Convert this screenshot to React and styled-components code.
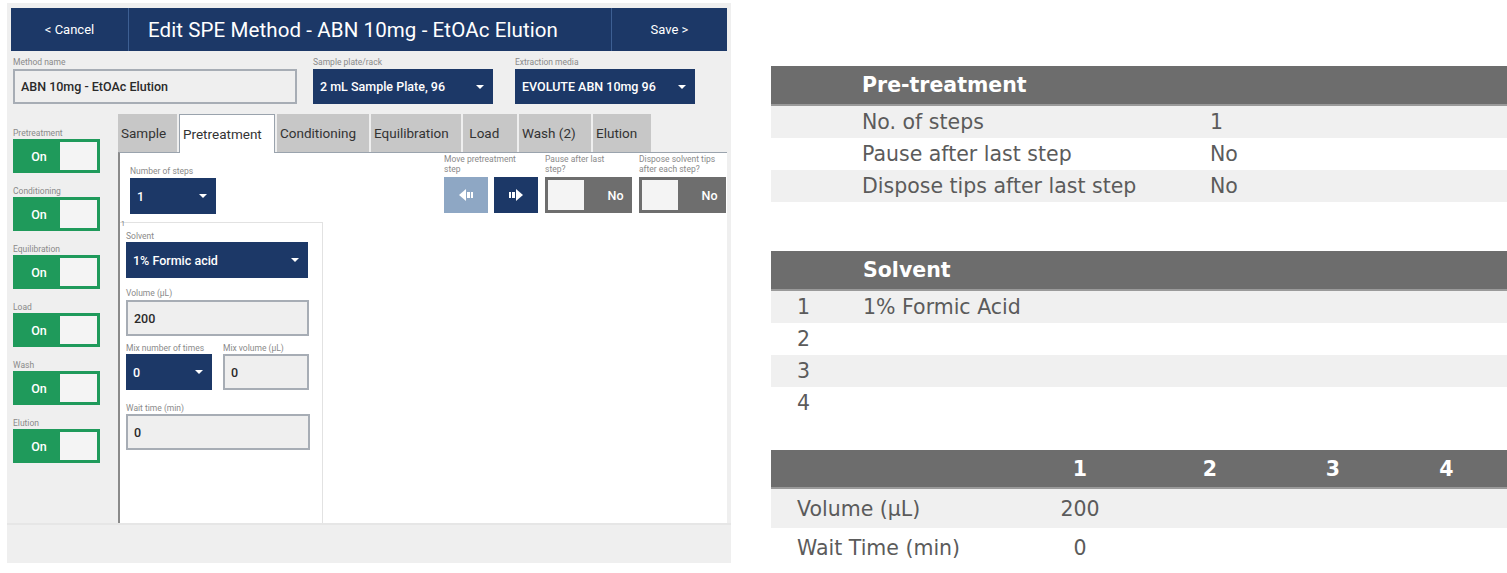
import React from "react";
import styled, { createGlobalStyle } from "styled-components";

const GlobalStyle = createGlobalStyle`
  html, body {
    margin: 0;
    padding: 0;
    background: #ffffff;
  }
  body {
    font-family: Roboto, "Liberation Sans", sans-serif;
  }
`;

const navy = "#1c3867";

const Page = styled.div`
  display: flex;
  align-items: flex-start;
  width: 1507px;
  height: 573px;
  overflow: hidden;
`;

/* ---------- left: device screen ---------- */

const Screen = styled.div`
  margin: 3px 0 0 7px;
  width: 724px;
  height: 560px;
  background: #efefef;
  display: flex;
  flex-direction: column;
  padding: 5px 4px 0 4px;
  box-sizing: border-box;
`;

const Header = styled.div`
  display: flex;
  height: 43px;
  background: ${navy};
  color: #fff;
  flex-shrink: 0;
`;

const HeaderButton = styled.div`
  width: ${(p) => p.$w}px;
  display: flex;
  align-items: center;
  justify-content: center;
  font-size: 13px;
  ${(p) => (p.$side === "left" ? "border-right" : "border-left")}: 1px solid #3d5f93;
  box-sizing: border-box;
`;

const HeaderTitle = styled.div`
  flex: 1;
  display: flex;
  align-items: center;
  justify-content: center;
  font-size: 20.5px;
  padding-right: 34px;
  letter-spacing: 0.1px;
`;

const FieldRow = styled.div`
  display: flex;
  padding: 7px 0 0 2px;
  height: 56px;
  box-sizing: border-box;
  flex-shrink: 0;
`;

const Field = styled.div`
  display: flex;
  flex-direction: column;
  margin-right: ${(p) => p.$mr || 0}px;
  width: ${(p) => (p.$w ? p.$w + "px" : "auto")};
`;

const Label = styled.div`
  font-size: 8.5px;
  color: #8a8a8a;
  height: ${(p) => p.$h || 11}px;
  line-height: 9.5px;
  white-space: ${(p) => (p.$wrap ? "normal" : "nowrap")};
  width: ${(p) => (p.$w ? p.$w + "px" : "auto")};
`;

const TextInput = styled.div`
  width: ${(p) => p.$w}px;
  height: ${(p) => p.$h || 35}px;
  box-sizing: border-box;
  border: 2px solid #a7adb5;
  background: #efefef;
  display: flex;
  align-items: center;
  padding-left: 6px;
  font-size: 12.5px;
  font-weight: 500;
  color: #2a2a2a;
`;

const Select = styled.div`
  width: ${(p) => p.$w}px;
  height: ${(p) => p.$h || 36}px;
  box-sizing: border-box;
  background: ${navy};
  color: #fff;
  display: flex;
  align-items: center;
  justify-content: space-between;
  padding: 0 9px 0 7px;
  font-size: 12.5px;
  font-weight: 500;
`;

const Caret = styled.span`
  width: 0;
  height: 0;
  border-left: 4px solid transparent;
  border-right: 4px solid transparent;
  border-top: 4px solid #fff;
`;

const Body = styled.div`
  display: flex;
  flex: 1;
  min-height: 0;
`;

const SideColumn = styled.div`
  width: 107px;
  flex-shrink: 0;
  display: flex;
  flex-direction: column;
  gap: 14px;
  padding: 22px 0 0 2px;
  box-sizing: border-box;
`;

const ToggleGroup = styled.div`
  display: flex;
  flex-direction: column;
`;

const Toggle = styled.div`
  width: ${(p) => p.$w || 87}px;
  height: ${(p) => p.$h || 34}px;
  box-sizing: border-box;
  border: 3px solid ${(p) => (p.$on ? "#1f9a5b" : "#6e6e6e")};
  background: ${(p) => (p.$on ? "#1f9a5b" : "#6e6e6e")};
  display: flex;
  flex-direction: ${(p) => (p.$on ? "row" : "row-reverse")};
  align-items: stretch;
`;

const ToggleText = styled.div`
  flex: 1;
  color: #fff;
  font-size: 12.5px;
  font-weight: 500;
  display: flex;
  align-items: center;
  justify-content: center;
  padding-left: ${(p) => (p.$on ? 2 : 18)}px;
`;

const ToggleKnob = styled.div`
  width: ${(p) => p.$w || 37}px;
  background: #f4f4f4;
`;

const Main = styled.div`
  flex: 1;
  display: flex;
  flex-direction: column;
  margin-top: 7px;
`;

const Tabs = styled.div`
  display: flex;
  gap: 2px;
  height: 38px;
  align-items: stretch;
  position: relative;
  z-index: 1;
`;

const Tab = styled.div`
  width: ${(p) => p.$w}px;
  padding-left: 3px;
  display: flex;
  align-items: center;
  font-size: 13.5px;
  color: #333;
  background: ${(p) => (p.$active ? "#fff" : "#c7c7c7")};
  border: ${(p) => (p.$active ? "1px solid #9aa3ad" : "none")};
  border-bottom: none;
  margin-bottom: ${(p) => (p.$active ? "-1px" : "0")};
  box-sizing: border-box;
`;

const Panel = styled.div`
  flex: 1;
  background: #fff;
  border-top: 1px solid #9aa3ad;
  border-left: 2px solid #8a8a8a;
  display: flex;
  flex-direction: column;
`;

const PanelTop = styled.div`
  display: flex;
  padding: 2px 0 0 10px;
  height: 69px;
  box-sizing: border-box;
`;

const StepsField = styled(Field)`
  padding-top: 12px;
  width: 314px;
`;

const Controls = styled.div`
  display: flex;
  gap: 7px;
`;

const ArrowPair = styled.div`
  display: flex;
  gap: 6px;
`;

const ArrowButton = styled.div`
  width: 44px;
  height: 36px;
  background: ${(p) => (p.$dim ? "#8ea7c4" : navy)};
  display: flex;
  align-items: center;
  justify-content: center;
`;

const StepBox = styled.div`
  width: 203px;
  flex: 1;
  border-top: 1px solid #e2e2e2;
  border-right: 1px solid #e2e2e2;
  padding: 0 0 0 6px;
  box-sizing: border-box;
  position: relative;
  display: flex;
  flex-direction: column;
`;

const StepIndex = styled.span`
  position: absolute;
  left: 1px;
  top: -3px;
  font-size: 7px;
  color: #777;
`;

const StepField = styled(Field)`
  margin-top: ${(p) => p.$mt || 0}px;
`;

const MixRow = styled.div`
  display: flex;
  gap: 11px;
  margin-top: 8px;
`;

const BottomBar = styled.div`
  height: 38px;
  flex-shrink: 0;
  margin: 0 -4px;
  border-top: 2px solid #e6e6e6;
  background: #efefef;
`;

/* ---------- right: summary tables ---------- */

const Summary = styled.div`
  margin-left: 40px;
  width: 736px;
  padding-top: 66px;
  display: flex;
  flex-direction: column;
  font-family: "DejaVu Sans", Verdana, sans-serif;
`;

const Table = styled.div`
  display: grid;
  grid-template-columns: ${(p) => p.$cols};
  margin-bottom: ${(p) => p.$mb || 0}px;
`;

const HeadCell = styled.div`
  background: #6d6d6d;
  color: #fff;
  font-weight: bold;
  font-size: 20.5px;
  height: ${(p) => p.$h}px;
  display: flex;
  align-items: center;
  justify-content: ${(p) => (p.$center ? "center" : "flex-start")};
  padding-left: ${(p) => p.$pl || 0}px;
  border-bottom: 2px solid #9a9a9a;
  box-sizing: border-box;
`;

const Cell = styled.div`
  background: ${(p) => (p.$alt ? "#f0f0f0" : "#fff")};
  color: #5b5b5b;
  font-size: 20.5px;
  height: ${(p) => p.$h}px;
  display: flex;
  align-items: center;
  justify-content: ${(p) => (p.$center ? "center" : "flex-start")};
  padding-left: ${(p) => p.$pl || 0}px;
  box-sizing: border-box;
`;

function Arrow({ dir }) {
  const flip = dir === "left" ? "scale(-1,1) translate(-16,0)" : undefined;
  return (
    <svg width="16" height="14" viewBox="0 0 16 14">
      <g transform={flip} fill="#fff">
        <rect x="1" y="4" width="2" height="6" />
        <rect x="4" y="4" width="3" height="6" />
        <path d="M8 1 L15 7 L8 13 Z" />
      </g>
    </svg>
  );
}

function OnToggle({ label }) {
  return (
    <ToggleGroup>
      <Label $h={10}>{label}</Label>
      <Toggle $on>
        <ToggleText $on>On</ToggleText>
        <ToggleKnob />
      </Toggle>
    </ToggleGroup>
  );
}

function NoToggle({ label }) {
  return (
    <Field $w={87}>
      <Label $wrap $w={label.length > 25 ? 92 : 78} $h={22}>
        {label}
      </Label>
      <Toggle $w={87} $h={36}>
        <ToggleText>No</ToggleText>
        <ToggleKnob $w={36} />
      </Toggle>
    </Field>
  );
}

const sections = ["Pretreatment", "Conditioning", "Equilibration", "Load", "Wash", "Elution"];
const tabs = [
  { name: "Sample", w: 59 },
  { name: "Pretreatment", w: 96, active: true },
  { name: "Conditioning", w: 92 },
  { name: "Equilibration", w: 90 },
  { name: "Load", w: 54, pad: true },
  { name: "Wash (2)", w: 72 },
  { name: "Elution", w: 58 },
];

const pretreatment = [
  ["No. of steps", "1"],
  ["Pause after last step", "No"],
  ["Dispose tips after last step", "No"],
];

export default function App() {
  return (
    <>
      <GlobalStyle />
      <Page>
        <Screen>
          <Header>
            <HeaderButton $w={118} $side="left">
              &lt; Cancel
            </HeaderButton>
            <HeaderTitle>Edit SPE Method - ABN 10mg - EtOAc Elution</HeaderTitle>
            <HeaderButton $w={116} $side="right">
              Save &gt;
            </HeaderButton>
          </Header>

          <FieldRow>
            <Field $mr={16}>
              <Label>Method name</Label>
              <TextInput $w={284}>ABN 10mg - EtOAc Elution</TextInput>
            </Field>
            <Field $mr={22}>
              <Label>Sample plate/rack</Label>
              <Select $w={180} $h={35}>
                2 mL Sample Plate, 96 <Caret />
              </Select>
            </Field>
            <Field>
              <Label>Extraction media</Label>
              <Select $w={180} $h={35}>
                EVOLUTE ABN 10mg 96 <Caret />
              </Select>
            </Field>
          </FieldRow>

          <Body>
            <SideColumn>
              {sections.map((s) => (
                <OnToggle key={s} label={s} />
              ))}
            </SideColumn>
            <Main>
              <Tabs>
                {tabs.map((t) => (
                  <Tab key={t.name} $active={t.active} $w={t.w}>
                    {t.pad ? "\u00a0" : ""}
                    {t.name}
                  </Tab>
                ))}
              </Tabs>
              <Panel>
                <PanelTop>
                  <StepsField>
                    <Label>Number of steps</Label>
                    <Select $w={86}>
                      1 <Caret />
                    </Select>
                  </StepsField>
                  <Controls>
                    <Field>
                      <Label $wrap $w={88} $h={22}>
                        Move pretreatment step
                      </Label>
                      <ArrowPair>
                        <ArrowButton $dim>
                          <Arrow dir="left" />
                        </ArrowButton>
                        <ArrowButton>
                          <Arrow dir="right" />
                        </ArrowButton>
                      </ArrowPair>
                    </Field>
                    <NoToggle label="Pause after last step?" />
                    <NoToggle label="Dispose solvent tips after each step?" />
                  </Controls>
                </PanelTop>
                <StepBox>
                  <StepIndex>1</StepIndex>
                  <StepField $mt={9}>
                    <Label $h={10}>Solvent</Label>
                    <Select $w={182}>
                      1% Formic acid <Caret />
                    </Select>
                  </StepField>
                  <StepField $mt={11}>
                    <Label $h={11}>Volume (µL)</Label>
                    <TextInput $w={183} $h={36}>
                      200
                    </TextInput>
                  </StepField>
                  <MixRow>
                    <Field>
                      <Label $h={10}>Mix number of times</Label>
                      <Select $w={86}>
                        0 <Caret />
                      </Select>
                    </Field>
                    <Field>
                      <Label $h={10}>Mix volume (µL)</Label>
                      <TextInput $w={86} $h={36}>
                        0
                      </TextInput>
                    </Field>
                  </MixRow>
                  <StepField $mt={14}>
                    <Label $h={10}>Wait time (min)</Label>
                    <TextInput $w={184} $h={36}>
                      0
                    </TextInput>
                  </StepField>
                </StepBox>
              </Panel>
            </Main>
          </Body>
          <BottomBar />
        </Screen>

        <Summary>
          <Table $cols="91px 348px 1fr" $mb={49}>
            <HeadCell $h={40} />
            <HeadCell $h={40}>Pre-treatment</HeadCell>
            <HeadCell $h={40} />
            {pretreatment.map(([k, v], i) => (
              <React.Fragment key={k}>
                <Cell $h={32} $alt={i % 2 === 0} />
                <Cell $h={32} $alt={i % 2 === 0}>
                  {k}
                </Cell>
                <Cell $h={32} $alt={i % 2 === 0}>
                  {v}
                </Cell>
              </React.Fragment>
            ))}
          </Table>

          <Table $cols="92px 1fr" $mb={31}>
            <HeadCell $h={40} />
            <HeadCell $h={40}>Solvent</HeadCell>
            {["1% Formic Acid", "", "", ""].map((s, i) => (
              <React.Fragment key={i}>
                <Cell $h={32} $alt={i % 2 === 0} $pl={26}>
                  {i + 1}
                </Cell>
                <Cell $h={32} $alt={i % 2 === 0}>
                  {s}
                </Cell>
              </React.Fragment>
            ))}
          </Table>

          <Table $cols="249px 120px 140px 106px 1fr">
            <HeadCell $h={39} />
            {["1", "2", "3", "4"].map((n) => (
              <HeadCell key={n} $h={39} $center>
                {n}
              </HeadCell>
            ))}
            <Cell $h={39} $alt $pl={26}>
              Volume (µL)
            </Cell>
            <Cell $h={39} $alt $center>
              200
            </Cell>
            <Cell $h={39} $alt />
            <Cell $h={39} $alt />
            <Cell $h={39} $alt />
            <Cell $h={40} $pl={26}>
              Wait Time (min)
            </Cell>
            <Cell $h={40} $center>
              0
            </Cell>
            <Cell $h={40} />
            <Cell $h={40} />
            <Cell $h={40} />
          </Table>
        </Summary>
      </Page>
    </>
  );
}
